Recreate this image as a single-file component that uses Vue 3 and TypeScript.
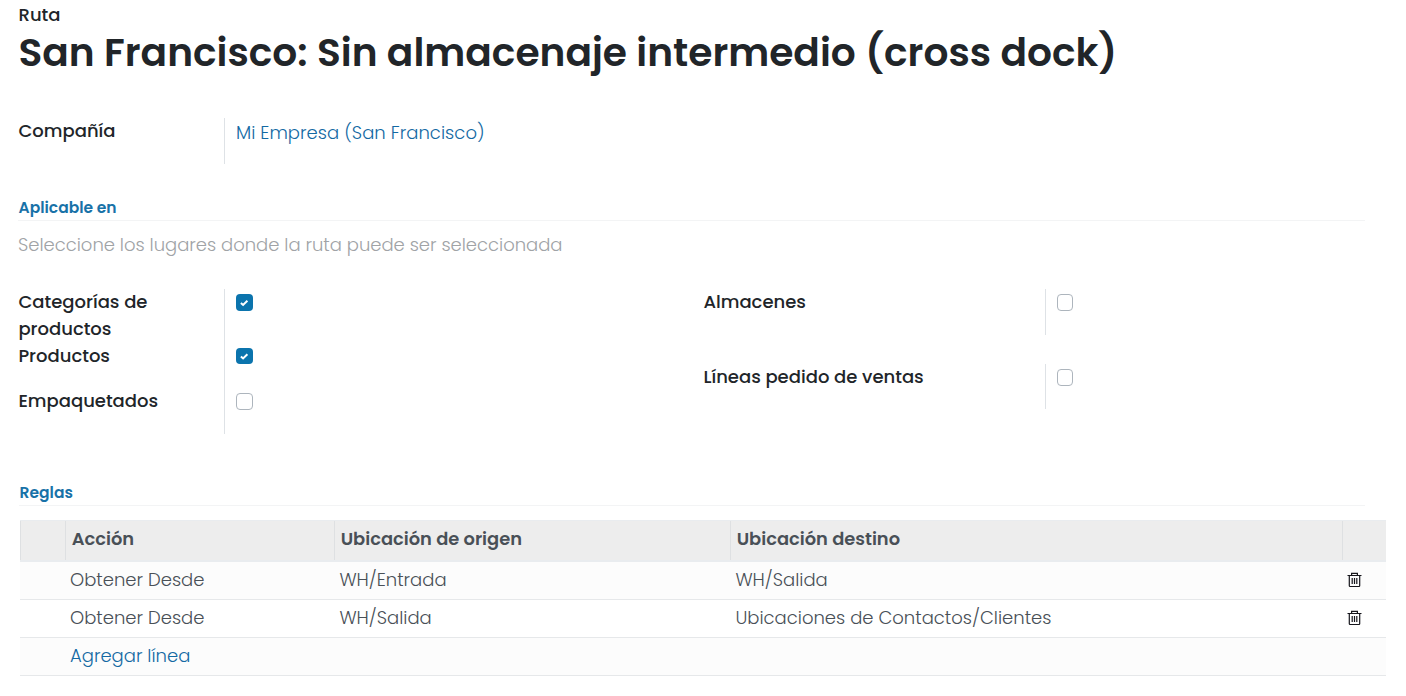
<script setup lang="ts">
interface Rule {
  action: string
  source: string
  destination: string
}

const rules: Rule[] = [
  { action: 'Obtener Desde', source: 'WH/Entrada', destination: 'WH/Salida' },
  { action: 'Obtener Desde', source: 'WH/Salida', destination: 'Ubicaciones de Contactos/Clientes' },
]
</script>

<template>
  <main class="sheet">
    <div class="kicker">Ruta</div>
    <h1 class="title">San Francisco: Sin almacenaje intermedio (cross dock)</h1>

    <div class="field company">
      <span class="label">Compañía</span>
      <a class="value link">Mi Empresa (San Francisco)</a>
    </div>

    <h2 class="section applicable">Aplicable en</h2>
    <p class="hint">Seleccione los lugares donde la ruta puede ser seleccionada</p>

    <div class="groups">
      <div class="group">
        <div class="field tall">
          <span class="label">Categorías de<br />productos</span>
          <span class="value"><i class="box on"><svg viewBox="0 0 17 17"><path d="M4.9 8.9 7.1 10.9 11.4 6.7" /></svg></i></span>
        </div>
        <div class="field">
          <span class="label">Productos</span>
          <span class="value"><i class="box on short"><svg viewBox="0 0 17 17"><path d="M4.9 8.4 7.1 10.4 11.4 6.2" /></svg></i></span>
        </div>
        <div class="field last">
          <span class="label">Empaquetados</span>
          <span class="value"><i class="box"></i></span>
        </div>
      </div>
      <div class="group right">
        <div class="field">
          <span class="label">Almacenes</span>
          <span class="value"><i class="box"></i></span>
        </div>
        <div class="field lines">
          <span class="label">Líneas pedido de ventas</span>
          <span class="value"><i class="box"></i></span>
        </div>
      </div>
    </div>

    <h2 class="section rules-title">Reglas</h2>
    <div class="table">
      <div class="row head">
        <span></span>
        <span>Acción</span>
        <span>Ubicación de origen</span>
        <span>Ubicación destino</span>
        <span></span>
      </div>
      <div v-for="(rule, i) in rules" :key="i" class="row">
        <span></span>
        <span>{{ rule.action }}</span>
        <span>{{ rule.source }}</span>
        <span>{{ rule.destination }}</span>
        <span class="trash">
          <svg viewBox="0 0 15 16" width="15" height="16">
            <path d="M.5 3.5h14M4.6 3V1.4h5.8V3" />
            <path d="M2.3 3.5v10.3q0 .7.7.7h9q.7 0 .7-.7V3.5" />
            <path d="M5.2 6v6M7.5 6v6M9.8 6v6" />
          </svg>
        </span>
      </div>
      <div class="row">
        <span></span>
        <a class="link">Agregar línea</a>
      </div>
    </div>
  </main>
</template>

<style>
body {
  background: #fff;
}
</style>

<style scoped>
.sheet {
  box-sizing: border-box;
  width: 1406px;
  height: 696px;
  padding-left: 18px;
  overflow: hidden;
  font-family: Poppins, Inter, 'Open Sans', sans-serif;
  font-size: 18px;
  font-weight: 300;
  color: #495057;
  white-space: nowrap;
}
.kicker {
  height: 30px;
  line-height: 30px;
  font-weight: 500;
  color: #212529;
  text-indent: 0.5px;
}
.title {
  margin: 0;
  height: 44px;
  line-height: 45px;
  font-size: 39.15px;
  font-weight: 600;
  color: #212529;
  text-indent: 0.5px;
}
.field {
  display: grid;
  grid-template-columns: 206px 1fr;
  height: 45px;
}
.field.tall {
  height: 54px;
}
.field.last {
  height: 46px;
}
.company {
  margin-top: 44px;
  height: 46px;
}
.label {
  margin-top: -1px;
  padding-left: 0.4px;
  line-height: 27px;
  font-weight: 500;
  color: #212529;
}
.value {
  border-left: 1px solid #dee2e6;
  padding-left: 11px;
  line-height: 30px;
}
.company .value {
  letter-spacing: 0.04px;
}
.link {
  color: #1369a3;
}
.section {
  box-sizing: border-box;
  margin: 0;
  width: 1347px;
  height: 29px;
  line-height: 32px;
  border-bottom: 1px solid #f3f4f5;
  font-size: 15.5px;
  font-weight: 600;
  color: #1872a8;
  text-indent: 0.6px;
}
.applicable {
  margin-top: 28px;
}
.hint {
  margin: 10px 0 0;
  line-height: 28px;
  letter-spacing: -0.02px;
  color: #a0a3a6;
}
.groups {
  display: grid;
  grid-template-columns: 685px 1fr;
  margin-top: 30px;
  height: 145px;
}
.right {
  display: flex;
  flex-direction: column;
  gap: 29px;
}
.right .field {
  grid-template-columns: 342px 1fr;
  height: 46px;
}
.right .field.lines {
  height: 45px;
}
.box {
  box-sizing: border-box;
  display: block;
  width: 17px;
  height: 17px;
  margin-top: 5px;
  border: 1px solid #adb5bd;
  border-radius: 4px;
}
.right .box {
  width: 16px;
}
.box.on {
  border: 0;
  background: #0b74ad;
}
.box.short {
  height: 16px;
}
.box svg {
  display: block;
  fill: none;
  stroke: #fff;
  stroke-width: 2;
}
.rules-title {
  margin: 43px 0 0 1px;
  width: 1346px;
}
.table {
  margin: 14px 0 0 2px;
  width: 1366px;
}
.row {
  box-sizing: border-box;
  display: grid;
  grid-template-columns: 45px 269px 396px 612px 44px;
  height: 38px;
  line-height: 36px;
  border-bottom: 1px solid #e6e8ea;
}
.row:nth-child(even),
.row:last-child {
  background: #fcfcfc;
}
.row > * {
  padding-left: 5.4px;
}
.row > :nth-child(2) {
  padding-left: 5px;
}
.row.head {
  height: 42px;
  line-height: 36px;
  border-top: 1px solid #e9ecef;
  border-bottom: 2px solid #e9ecef;
  background: #ededed;
  font-size: 17.85px;
  font-weight: 600;
}
.row.head > * {
  padding-left: 5.7px;
  border-left: 1px solid #dee0e2;
}
.row > .trash {
  padding: 10px 0 0 5px;
  line-height: 0;
}
.trash svg {
  fill: none;
  stroke: #16161c;
  stroke-width: 1.2;
}
</style>
